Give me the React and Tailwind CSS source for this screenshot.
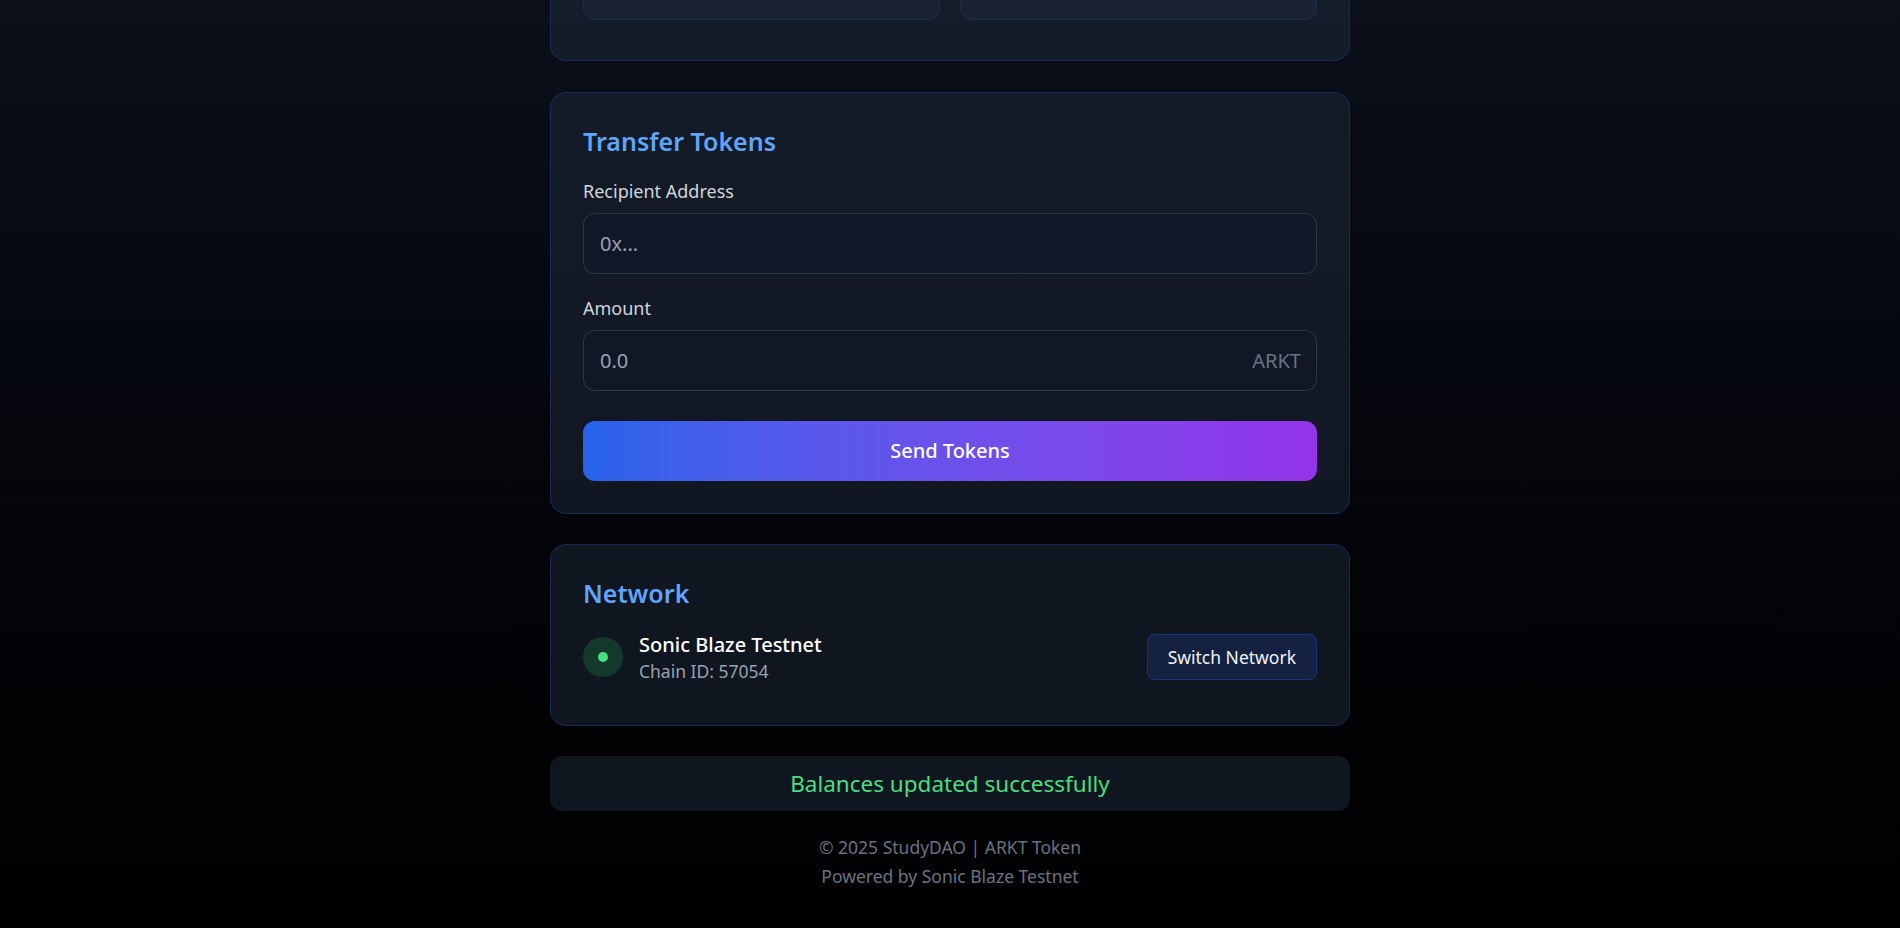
import { useState } from 'react';

const font = { fontFamily: '"Noto Sans", "Open Sans", sans-serif' };

const Card = ({ className = '', children }) => (
  <div className={`rounded-2xl border border-blue-900/50 bg-gray-800/50 px-8 pt-8 ${className}`}>
    {children}
  </div>
);

const App = () => {
  const [recipient, setRecipient] = useState('');
  const [amount, setAmount] = useState('');

  return (
    <div
      className="h-[928px] overflow-hidden bg-linear-to-b from-[#0b101a] to-[#010102] text-white"
      style={font}
    >
      <div className="mx-auto flex w-[800px] flex-col">
        {/* Balances card (scrolled past) */}
        <Card className="-mt-[115px] pb-10">
          <div className="grid grid-cols-2 gap-5">
            <div className="h-[102px] rounded-xl border border-blue-900/40 bg-gray-800/50" />
            <div className="h-[102px] rounded-xl border border-blue-900/40 bg-gray-800/50" />
          </div>
        </Card>

        {/* Transfer */}
        <div className="mt-[31px] rounded-2xl border border-blue-900/50 bg-gray-800/50 p-8">
          <h2 className="mb-5 text-[25px] leading-8 font-semibold text-[#60a5fa]">Transfer Tokens</h2>

          <div className="mb-5">
            <label className="mb-2 block text-lg leading-7 text-gray-300">Recipient Address</label>
            <input
              value={recipient}
              onChange={(e) => setRecipient(e.target.value)}
              placeholder="0x..."
              className="h-[61px] w-full rounded-xl border border-gray-700/70 bg-gray-900/70 px-4 text-xl text-white placeholder:text-gray-400 outline-none"
            />
          </div>

          <div>
            <label className="mb-2 block text-lg leading-7 text-gray-300">Amount</label>
            <div className="relative">
              <input
                value={amount}
                onChange={(e) => setAmount(e.target.value)}
                placeholder="0.0"
                className="h-[61px] w-full rounded-xl border border-gray-700/70 bg-gray-900/70 px-4 pr-20 text-xl text-white placeholder:text-gray-400 outline-none"
              />
              <span className="absolute top-1/2 right-4 -translate-y-1/2 text-xl text-gray-500">ARKT</span>
            </div>
          </div>

          <button className="mt-[30px] h-[60px] w-full rounded-xl bg-linear-to-r from-[#2563eb] to-[#9333ea] text-xl font-medium text-white">
            Send Tokens
          </button>
        </div>

        {/* Network */}
        <Card className="mt-[30px] pb-[42px]">
          <h2 className="mb-[22px] text-[25px] leading-8 font-semibold text-[#60a5fa]">Network</h2>
          <div className="flex items-center justify-between">
            <div className="flex items-center gap-4">
              <div className="flex h-10 w-10 items-center justify-center rounded-full bg-[#22c55e]/20">
                <div className="h-2.5 w-2.5 rounded-full bg-[#4ade80]" />
              </div>
              <div>
                <p className="text-xl leading-7 font-medium text-white">Sonic Blaze Testnet</p>
                <p className="text-[17.5px] leading-6 text-gray-400">Chain ID: 57054</p>
              </div>
            </div>
            <button className="rounded-lg border border-[#1e40af]/60 bg-[#1e3a8a]/30 px-5 py-2.5 text-[17.5px] leading-6 text-gray-100">
              Switch Network
            </button>
          </div>
        </Card>

        {/* Status */}
        <div className="mt-[30px] rounded-xl bg-gray-800/50 py-[13.5px] text-center text-[22.5px] leading-7 text-[#4ade80]">
          Balances updated successfully
        </div>

        {/* Footer */}
        <footer className="mt-[22px] text-center text-[17.5px] leading-7 text-gray-500">
          <p>© 2025 StudyDAO | ARKT Token</p>
          <p className="mt-px">Powered by Sonic Blaze Testnet</p>
        </footer>
      </div>
    </div>
  );
};

export default App;
